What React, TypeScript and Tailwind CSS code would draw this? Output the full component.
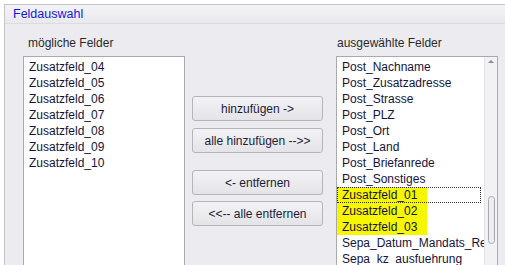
const left = ['Zusatzfeld_04', 'Zusatzfeld_05', 'Zusatzfeld_06', 'Zusatzfeld_07', 'Zusatzfeld_08', 'Zusatzfeld_09', 'Zusatzfeld_10'];

const right = [
  'Post_Nachname',
  'Post_Zusatzadresse',
  'Post_Strasse',
  'Post_PLZ',
  'Post_Ort',
  'Post_Land',
  'Post_Briefanrede',
  'Post_Sonstiges',
  'Zusatzfeld_01',
  'Zusatzfeld_02',
  'Zusatzfeld_03',
  'Sepa_Datum_Mandats_Referenz',
  'Sepa_kz_ausfuehrung',
];

const buttons = ['hinzufügen ->', 'alle hinzufügen -->>', '<- entfernen', '<<-- alle entfernen'];

export default function App() {
  return (
    <div className="w-[505px] h-[265px] overflow-hidden bg-white pl-1 pt-1 text-[12px] leading-4" style={{ fontFamily: '"Liberation Sans", Arial, sans-serif' }}>
      <div className="h-full border-l border-t border-[#c4c4c8] bg-[#ececf0]">
        {/* Header */}
        <div className="h-[19px] flex items-center pl-2 bg-gradient-to-b from-[#f4f4f6] to-[#e9e9ed] border-b border-[#dcdce0] text-[#1515e0] text-[12.5px]">
          Feldauswahl
        </div>

        <div className="flex pl-[18px] pt-[11px]">
          {/* Left column */}
          <div className="w-[162px]">
            <div className="pl-[5px] text-[#2a2a2a] h-4">mögliche Felder</div>
            <div className="mt-[5px] h-[220px] bg-white border border-[#a9a9ae] pl-[5px] pt-[2px] text-[#14143c]">
              {left.map((l) => (
                <div key={l} className="h-4">{l}</div>
              ))}
            </div>
          </div>

          {/* Buttons */}
          <div className="w-[131px] ml-[7px] pt-[61px] flex flex-col">
            {buttons.map((b, i) => (
              <button
                key={b}
                className={`h-[25px] w-[131px] rounded-[3px] border border-[#b4b4b9] bg-gradient-to-b from-[#f3f3f5] to-[#e4e4e8] text-[#1c1c3c] text-[12px] ${i === 1 ? 'mt-[7px]' : ''} ${i === 2 ? 'mt-[17px]' : ''} ${i === 3 ? 'mt-[6px]' : ''}`}
              >
                {b}
              </button>
            ))}
          </div>

          {/* Right column */}
          <div className="w-[162px] ml-[13px]">
            <div className="pl-[1px] text-[#2a2a2a] h-4">ausgewählte Felder</div>
            <div className="mt-[5px] h-[220px] bg-white border border-[#a9a9ae] flex overflow-hidden">
              <div className="flex-1 pt-[2px] text-[#14143c] overflow-hidden">
                {right.map((r, i) => {
                  const marked = i >= 8 && i <= 10;
                  return (
                    <div
                      key={r}
                      className={`h-4 whitespace-nowrap ${i === 8 ? 'outline-1 outline-dotted outline-[#333] -outline-offset-1 mr-[3px]' : ''}`}
                    >
                      <div className={`h-4 pl-[5px] ${marked ? 'w-[90px] bg-[#f6f600]' : ''}`}>{r}</div>
                    </div>
                  );
                })}
              </div>
              {/* Scrollbar */}
              <div className="w-[13px] bg-[#f2f2f5] border-l border-[#e4e4e8] flex flex-col items-center">
                <div className="mt-[3px] w-0 h-0 border-l-[3px] border-r-[3px] border-b-[3px] border-l-transparent border-r-transparent border-b-[#8a8a90]" />
                <div className="mt-[133px] w-[7px] h-[48px] rounded-[4px] border border-[#a8a8ae] bg-[#ededf0]" />
              </div>
            </div>
          </div>
        </div>
      </div>
    </div>
  );
}
